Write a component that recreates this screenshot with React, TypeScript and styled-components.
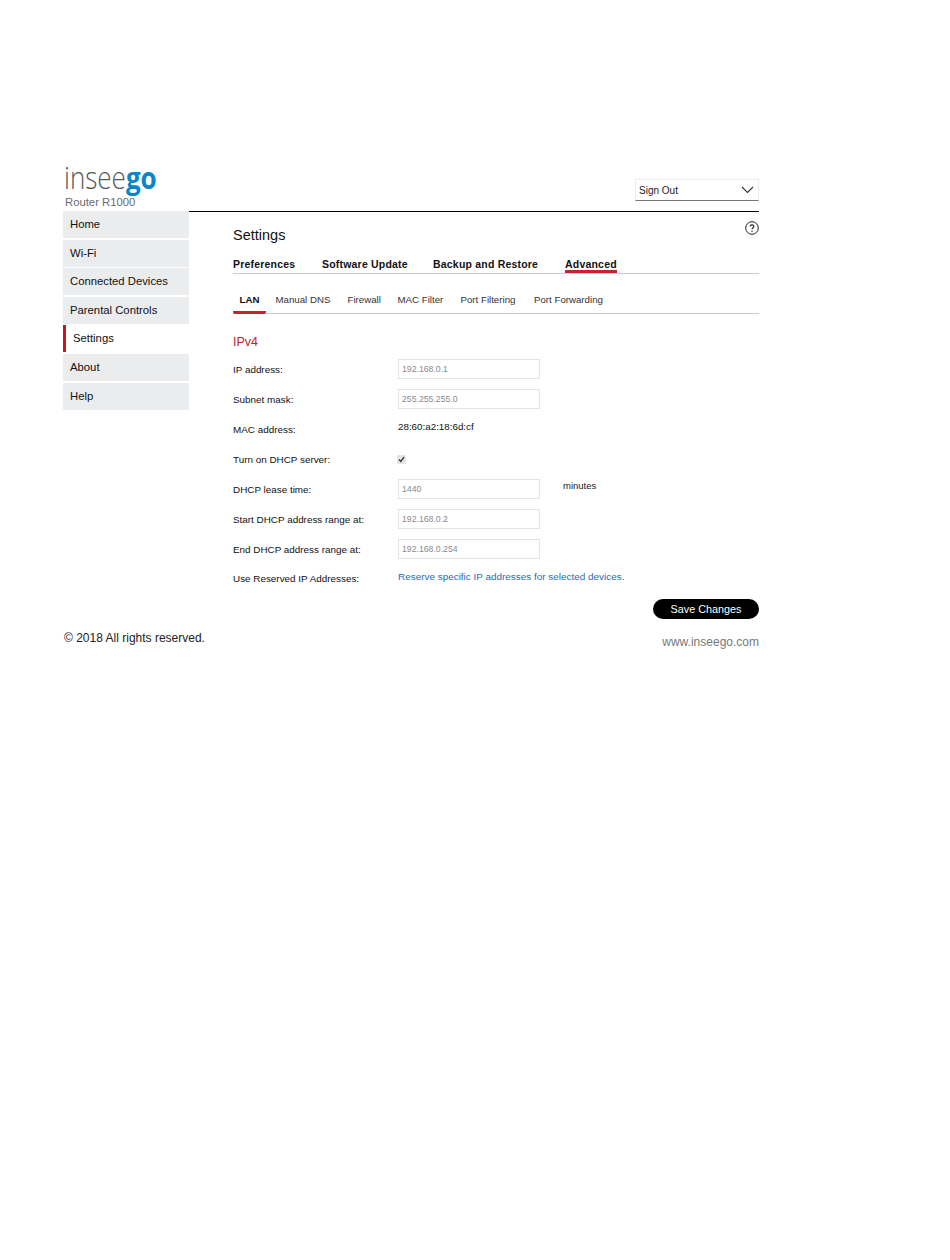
import React from "react";
import styled, { createGlobalStyle } from "styled-components";

const Global = createGlobalStyle`
  html, body { margin: 0; padding: 0; background: #fff; }
  body { font-family: "Liberation Sans", Arial, sans-serif; color: #111; }
`;

const Page = styled.div`
  width: 696px;
  margin-left: 63px;
  padding-top: 161px;
`;

const Brand = styled.div`
  height: 50px;
  display: flex;
  flex-direction: column;
`;

const Logo = styled.div`
  font-family: "Open Sans", sans-serif;
  font-size: 26px;
  line-height: 34px;
  font-weight: 300;
  color: #55585a;
  margin-left: 1px;
  transform: scaleY(1.2);
  transform-origin: 0 24px;
  b { font-weight: 700; color: #0a86c8; }
`;

const Model = styled.div`
  font-size: 11.3px;
  line-height: 14px;
  color: #6a6c6e;
  margin-left: 2px;
`;

const Top = styled.div`
  display: flex;
  align-items: flex-end;
  justify-content: flex-end;
  height: 0;
`;

const Select = styled.div`
  width: 124px;
  height: 22px;
  box-sizing: border-box;
  margin-bottom: 10px;
  border: 1px solid #ececec;
  border-bottom: 1px solid #777;
  padding: 0 4px 0 3px;
  display: flex;
  align-items: center;
  justify-content: space-between;
  font-size: 10px;
  color: #222;
`;

const Body = styled.div`
  display: flex;
  align-items: flex-start;
`;

const Side = styled.nav`
  width: 126px;
  flex: none;
  display: flex;
  flex-direction: column;
`;

const NavItem = styled.div<{ $active?: boolean }>`
  height: 27px;
  margin-bottom: 1.6px;
  box-sizing: border-box;
  display: flex;
  align-items: center;
  font-size: 11.3px;
  color: #111;
  padding-left: 7px;
  padding-bottom: 1px;
  background: ${(p) => (p.$active ? "#fff" : "#ebecee")};
  border-left: ${(p) => (p.$active ? "3px solid #c4161c" : "0")};
`;

const Main = styled.main`
  flex: 1;
  border-top: 1px solid #000;
  padding: 0 0 0 44px;
  position: relative;
`;

const TitleRow = styled.div`
  display: flex;
  justify-content: space-between;
  align-items: flex-start;
  height: 42px;
`;

const Title = styled.h1`
  margin: 13px 0 0;
  font-size: 14.5px;
  line-height: 20px;
  font-weight: 400;
  color: #111;
`;

const HelpIcon = styled.svg`
  margin-top: 9px;
  display: block;
`;

const Tabs = styled.div`
  display: flex;
  height: 20px;
  box-sizing: border-box;
  border-bottom: 1px solid #ccc;
`;

const Tab = styled.div<{ $active?: boolean; $w: number }>`
  width: ${(p) => p.$w}px;
  flex: none;
  font-size: 10.5px;
  line-height: 13px;
  font-weight: 700;
  letter-spacing: 0.2px;
  color: #111;
  span {
    display: inline-block;
    height: 19px;
    padding-top: 4px;
    box-sizing: border-box;
    border-bottom: ${(p) => (p.$active ? "3px solid #c4242a" : "0")};
  }
`;

const SubTabs = styled.div`
  display: flex;
  height: 40px;
  box-sizing: border-box;
  border-bottom: 1px solid #ccc;
`;

const SubTab = styled.div<{ $active?: boolean; $w: number; $gap?: number }>`
  width: ${(p) => p.$w}px;
  margin-left: ${(p) => p.$gap ?? 0}px;
  flex: none;
  height: 40px;
  box-sizing: border-box;
  padding-top: 20px;
  font-size: 9.7px;
  line-height: 12px;
  color: ${(p) => (p.$active ? "#111" : "#333")};
  font-weight: ${(p) => (p.$active ? 700 : 400)};
  text-align: ${(p) => (p.$active ? "center" : "left")};
  border-bottom: ${(p) => (p.$active ? "3px solid #c4242a" : "0")};
  border-radius: 0 0 2px 2px;
`;

const Heading = styled.h2`
  margin: 19px 0 3px;
  font-size: 12.5px;
  line-height: 18px;
  font-weight: 400;
  color: #c4242a;
`;

const Row = styled.div<{ $h?: number }>`
  display: flex;
  align-items: center;
  height: ${(p) => p.$h ?? 30}px;
`;

const Label = styled.div<{ $dy?: number }>`
  width: 165px;
  flex: none;
  font-size: 9.9px;
  color: #111;
  padding-top: ${(p) => p.$dy ?? 0}px;
`;

const Input = styled.input`
  width: 142px;
  height: 20px;
  box-sizing: border-box;
  border: 1px solid #e4e4e4;
  padding: 0 3px;
  font: 8.7px "Liberation Sans", Arial, sans-serif;
  color: #8a8a8a;
  background: #fff;
  outline: none;
`;

const Value = styled.div`
  font-size: 9.8px;
  color: #111;
  padding-bottom: 5px;
`;

const Check = styled.div`
  width: 9px;
  height: 9px;
  margin-left: -1px;
  background: #e4e4e4;
  border-radius: 1px;
  display: flex;
  align-items: center;
  justify-content: center;
`;

const Unit = styled.div`
  font-size: 9.5px;
  color: #222;
  margin-left: 23px;
  padding-bottom: 8px;
`;

const ReserveLink = styled.a`
  font-size: 9.93px;
  color: #2a6cb8;
  text-decoration: none;
  padding-bottom: 2px;
`;

const Actions = styled.div`
  display: flex;
  justify-content: flex-end;
  margin-top: 9px;
`;

const SaveButton = styled.button`
  width: 106px;
  height: 20px;
  padding: 0;
  border: 0;
  border-radius: 10px;
  background: #000;
  color: #fff;
  font: 10.8px "Liberation Sans", Arial, sans-serif;
`;

const Footer = styled.footer`
  display: flex;
  justify-content: space-between;
  align-items: flex-start;
  margin-top: 12px;
`;

const Copy = styled.div`
  font-size: 12px;
  line-height: 14px;
  color: #222;
  margin-left: 1px;
`;

const Site = styled.div`
  font-size: 12px;
  line-height: 14px;
  color: #777;
  padding-top: 4px;
`;

const nav = ["Home", "Wi-Fi", "Connected Devices", "Parental Controls", "Settings", "About", "Help"];
const tabs: [string, number][] = [["Preferences", 89], ["Software Update", 111], ["Backup and Restore", 132], ["Advanced", 60]];
const subs: [string, number, number][] = [["LAN", 33, 0], ["Manual DNS", 72, 9.5], ["Firewall", 50, 0], ["MAC Filter", 63, 0], ["Port Filtering", 73.5, 0], ["Port Forwarding", 80, 0]];

export default function App() {
  return (
    <Page>
      <Global />
      <Brand>
        <Logo>insee<b>go</b></Logo>
        <Model>Router R1000</Model>
      </Brand>
      <Top>
        <Select>
          Sign Out
          <svg width="13" height="8" viewBox="0 0 13 8" fill="none" stroke="#333" strokeWidth="1.1">
            <path d="M1 1l5.5 5.5L12 1" />
          </svg>
        </Select>
      </Top>
      <Body>
        <Side>
          {nav.map((n) => (
            <NavItem key={n} $active={n === "Settings"}>{n}</NavItem>
          ))}
        </Side>
        <Main>
          <TitleRow>
            <Title>Settings</Title>
            <HelpIcon width="14" height="14" viewBox="0 0 14 14" fill="none">
              <circle cx="7" cy="7" r="6.3" stroke="#222" strokeWidth="1" />
              <path d="M5.2 5.6c0-2.3 3.6-2.3 3.6-.2 0 1.3-1.8 1.4-1.8 2.9" stroke="#222" strokeWidth="1.1" />
              <circle cx="7" cy="10.2" r=".7" fill="#222" />
            </HelpIcon>
          </TitleRow>
          <Tabs>
            {tabs.map(([t, w]) => (
              <Tab key={t} $w={w} $active={t === "Advanced"}><span>{t}</span></Tab>
            ))}
          </Tabs>
          <SubTabs>
            {subs.map(([t, w, g]) => (
              <SubTab key={t} $w={w} $gap={g} $active={t === "LAN"}>{t}</SubTab>
            ))}
          </SubTabs>
          <Heading>IPv4</Heading>
          <Row><Label>IP address:</Label><Input readOnly value="192.168.0.1" /></Row>
          <Row><Label>Subnet mask:</Label><Input readOnly value="255.255.255.0" /></Row>
          <Row><Label>MAC address:</Label><Value>28:60:a2:18:6d:cf</Value></Row>
          <Row>
            <Label>Turn on DHCP server:</Label>
            <Check>
              <svg width="7" height="7" viewBox="0 0 7 7" fill="none" stroke="#333" strokeWidth="1.4"><path d="M1 3.6l1.8 1.9L6 1.2" /></svg>
            </Check>
          </Row>
          <Row><Label>DHCP lease time:</Label><Input readOnly value="1440" /><Unit>minutes</Unit></Row>
          <Row><Label>Start DHCP address range at:</Label><Input readOnly value="192.168.0.2" /></Row>
          <Row><Label>End DHCP address range at:</Label><Input readOnly value="192.168.0.254" /></Row>
          <Row $h={26}>
            <Label $dy={2}>Use Reserved IP Addresses:</Label>
            <ReserveLink href="#">Reserve specific IP addresses for selected devices.</ReserveLink>
          </Row>
          <Actions><SaveButton>Save Changes</SaveButton></Actions>
        </Main>
      </Body>
      <Footer>
        <Copy>© 2018 All rights reserved.</Copy>
        <Site>www.inseego.com</Site>
      </Footer>
    </Page>
  );
}
